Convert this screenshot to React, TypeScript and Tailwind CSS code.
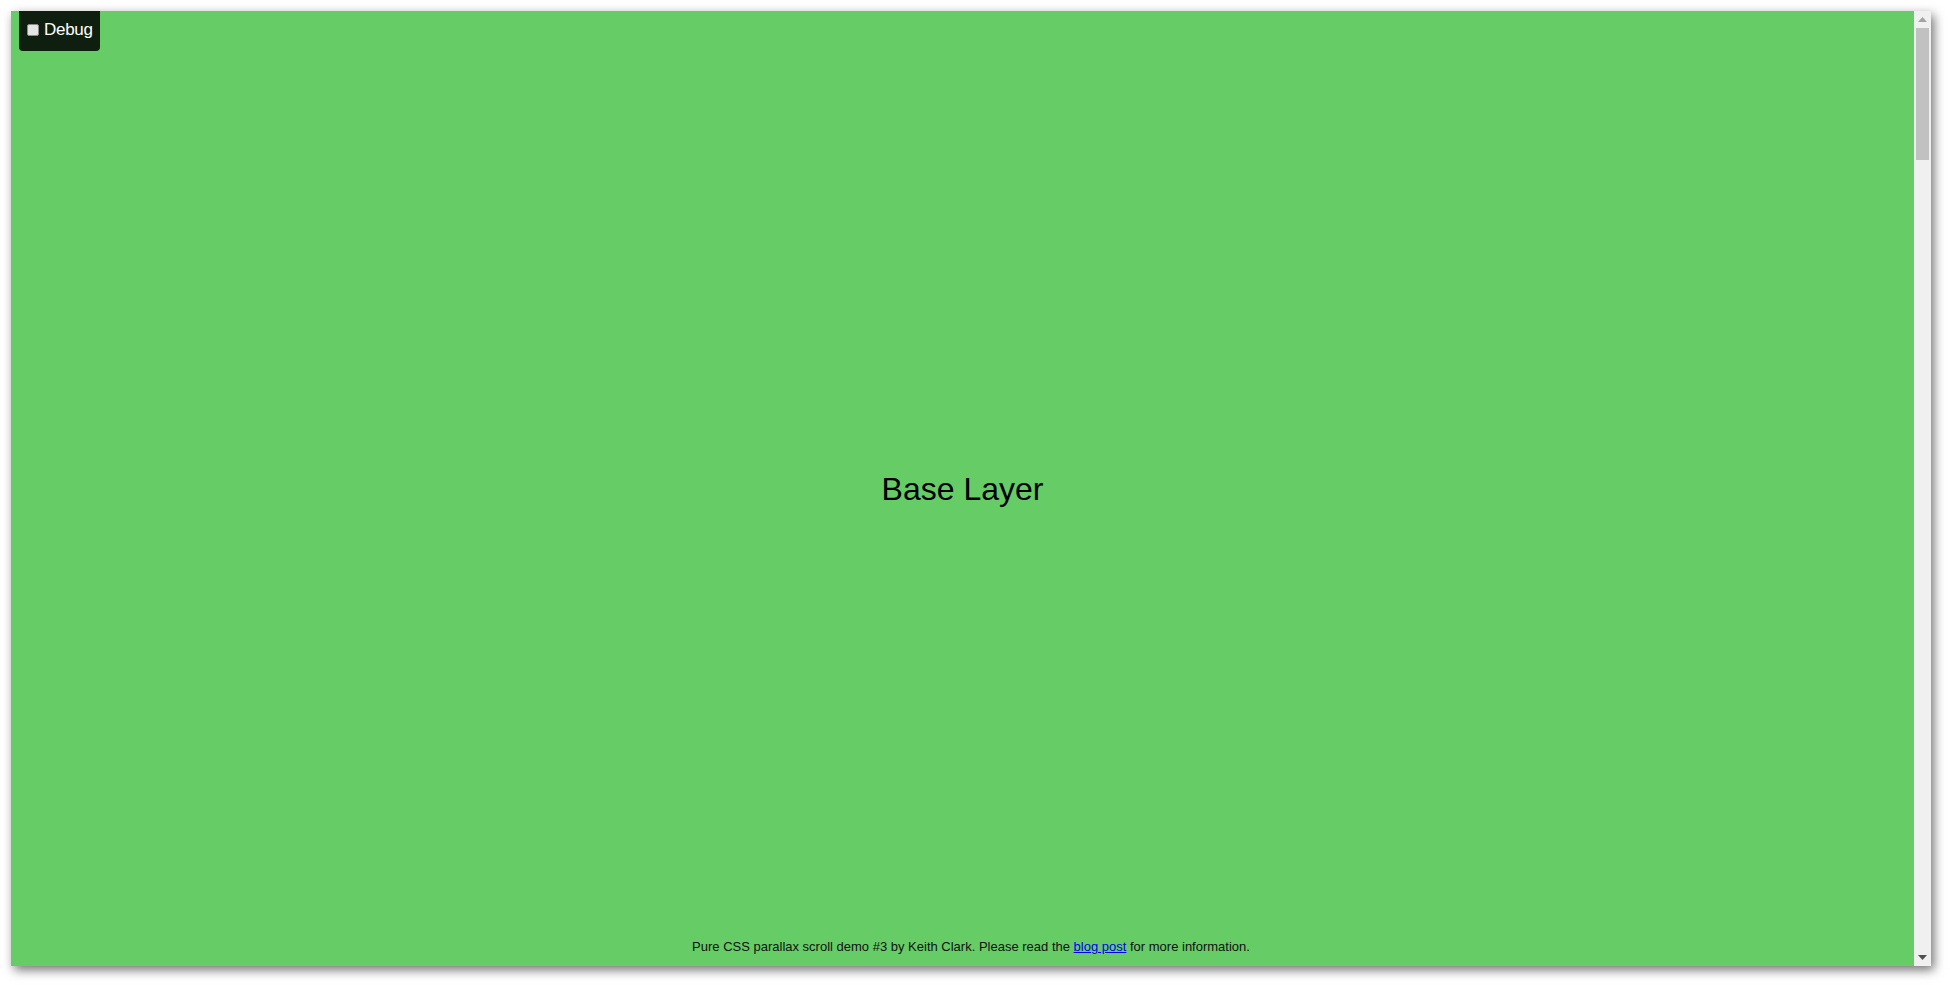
import React from 'react';

const font = { fontFamily: '"Liberation Sans", Arial, sans-serif' };

const Scrollbar: React.FC = () => (
  <div className="w-[17px] shrink-0 bg-[#f0f0f0] flex flex-col items-center">
    <div className="h-[17px] w-full flex items-center justify-center">
      <svg width="9" height="5" viewBox="0 0 9 5">
        <path d="M0 5 L4.5 0 L9 5 Z" fill="#a3a3a3" />
      </svg>
    </div>
    <div className="w-[13px] h-[132px] bg-[#c1c1c1]" />
    <div className="flex-1" />
    <div className="h-[17px] w-full flex items-center justify-center">
      <svg width="9" height="5" viewBox="0 0 9 5">
        <path d="M0 0 L9 0 L4.5 5 Z" fill="#505050" />
      </svg>
    </div>
  </div>
);

const DebugToggle: React.FC = () => (
  <label className="absolute top-0 left-[8px] w-[81px] h-[40px] bg-[#0f1f0f] rounded-b-[4px] flex items-center gap-[5px] pl-[8px] text-white text-[17px] tracking-[-0.3px]">
    <span className="w-[12px] h-[12px] rounded-[2px] border border-[#8a8a8a] bg-[#e4e4e4] mt-[-2px]" />
    <span className="mt-[-2px]">Debug</span>
  </label>
);

export default function App() {
  return (
    <div className="w-[1950px] h-[985px] bg-white pl-[11px] pt-[11px]" style={font}>
      <div className="relative w-[1920px] h-[955px] flex shadow-[3px_4px_10px_rgba(0,0,0,0.55)]">
        <div className="relative flex-1 bg-[#66cc66] flex items-center justify-center">
          <DebugToggle />
          <h1 className="text-[32px] text-black leading-none">Base Layer</h1>
        </div>
        <Scrollbar />
        <p className="absolute bottom-[12px] left-0 right-0 text-center text-[13px] leading-[15px] text-[#111]">
          Pure CSS parallax scroll demo #3 by Keith Clark. Please read the{' '}
          <a className="text-[#0000ee] underline">blog post</a> for more information.
        </p>
      </div>
    </div>
  );
}
